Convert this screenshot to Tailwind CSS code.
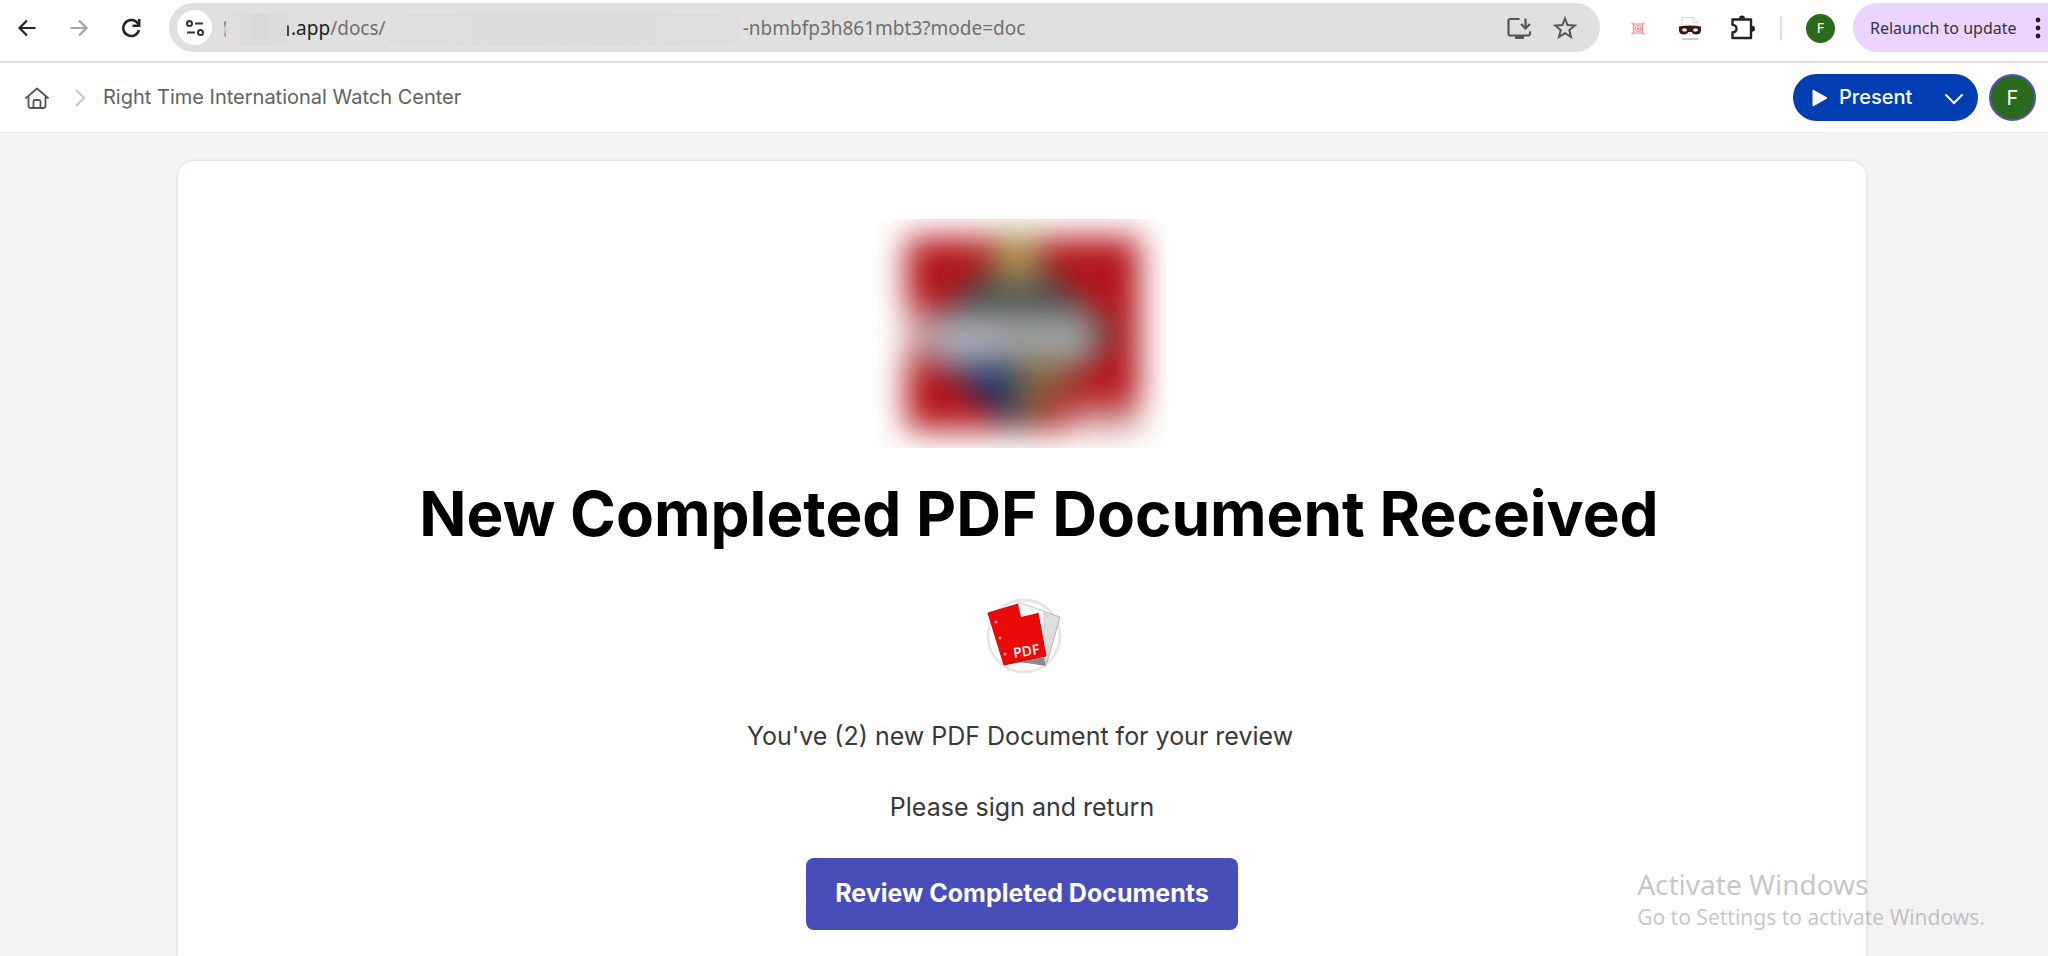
<!DOCTYPE html>
<html lang="en">
<head>
<meta charset="utf-8">
<title>Right Time International Watch Center</title>
<script src="https://cdn.jsdelivr.net/npm/@tailwindcss/browser@4"></script>
</head>
<body class="flex h-screen flex-col overflow-hidden bg-white font-['Inter',sans-serif]">
<nav aria-label="Browser toolbar" class="flex h-[63px] shrink-0 items-start border-b-2 border-[#dedede] pt-[3px] pl-[15px] font-['Noto_Sans',sans-serif]">
  <div class="flex h-[50px] shrink-0 items-center gap-7">
    <button aria-label="Back" class="size-6"><svg viewBox="0 0 24 24" class="size-6" fill="none" stroke="#222" stroke-width="2.2"><path d="M20.500 12H4.500M12 4.500 4.500 12l7.500 7.500"/></svg></button>
    <button aria-label="Forward" class="size-6"><svg viewBox="0 0 24 24" class="size-6" fill="none" stroke="#a3a3a3" stroke-width="2.200"><path d="M3.500 12h16M12 4.500l7.500 7.500-7.500 7.500"/></svg></button>
    <button aria-label="Reload" class="size-6"><svg viewBox="0 0 24 24" class="size-6" fill="none" stroke="#222" stroke-width="2.500"><path d="M20 14.200A8 8 0 1 1 18.300 6.800L20 8.500"/><path d="M20.200 3v6.800H13.500"/></svg></button>
  </div>
  <div class="ml-[26px] flex h-[49px] min-w-0 flex-1 items-center rounded-full bg-[#e0e0e0] pr-[22px] pl-2">
    <button aria-label="Site information" class="flex size-[35px] shrink-0 items-center justify-center rounded-full bg-white"><svg viewBox="0 0 20 20" class="size-5" fill="none" stroke="#333" stroke-width="2"><circle cx="4.500" cy="5.500" r="2.500"/><path d="M10 5.500h8M2 14.500h8"/><circle cx="15.500" cy="14.500" r="2.500"/></svg></button>
    <div class="ml-3 flex min-w-0 flex-1 items-center pt-[2px] text-[19px] whitespace-nowrap text-[#6f6f6f]">
      <span class="h-4 w-[2px] rounded-l-full bg-gradient-to-b from-[#777] via-[#cfcfcf] to-[#b08a70]"></span>
      <span class="h-8 w-[61px] bg-gradient-to-r from-[#dedede] via-[#d9d9d9] to-[#dcdcdc]"></span>
      <span class="mt-1 h-[11px] w-[2px] rounded-tr-full bg-[#444]"></span>
      <span class="ml-[2px] text-[#222]">.app</span><span>/docs/</span>
      <span class="ml-1 h-8 w-[350px] rounded-sm bg-gradient-to-r from-[#dedede] via-[#dbdbdb] to-[#dedede]"></span>
      <span class="ml-[3px]">-nbmbfp3h861mbt3?mode=doc</span>
    </div>
    <div class="flex items-center gap-5">
      <button aria-label="Install app" class="size-[26px]"><svg viewBox="0 0 26 26" class="size-[26px]" fill="none" stroke="#555" stroke-width="2.200"><path d="M13.500 4H4.500Q2.500 4 2.500 6V18.500q0 2 2 2H22q2 0 2-2V16.500"/><path d="M19.500 3.500v9.500M15 9l4.500 4.500L24 9"/><path d="M9 22.500h9" stroke-width="3"/></svg></button>
      <button aria-label="Bookmark" class="size-[26px]"><svg viewBox="0 0 26 26" class="size-[26px]" fill="none" stroke="#555" stroke-width="2"><path d="M13 3.500l2.600 6.500 7.200.5-5.500 4.500 1.800 7L13 18.200 6.900 22l1.800-7-5.500-4.500 7.200-.5z"/></svg></button>
    </div>
  </div>
  <div class="flex h-[50px] shrink-0 items-center">
    <button aria-label="Capture extension" class="ml-7 size-5"><svg viewBox="0 0 20 20" class="size-5" fill="none" stroke="#fb8f98" stroke-width="1.200"><path d="M3.500 4.500l3 3M16.500 4.500l-3 3M3.500 16.500l3-3M16.500 16.500l-3-3"/><rect x="5.500" y="6" width="9" height="9"/><circle cx="10" cy="10.500" r="3"/><circle cx="10" cy="10.500" r="1" fill="#fb7f8a"/></svg></button>
    <button aria-label="Mask extension" class="ml-7 size-7"><svg viewBox="0 0 28 28" class="size-7"><path d="M6 14V3.500h11l5 5V14" fill="#fff" stroke="#d8d8d8"/><path d="M17 3.500v5h5" fill="none" stroke="#d8d8d8"/><path d="M3 12.500q11-2 22 0v3.500q0 4.500-5 4.500-3 0-4.500-2.500h-3q-1.500 2.500-4.500 2.500-5 0-5-4.500z" fill="#35191a"/><ellipse cx="8.500" cy="16" rx="2.600" ry="1.700" fill="#e7dddd"/><ellipse cx="19.500" cy="16" rx="2.600" ry="1.700" fill="#e7dddd"/><path d="M6 25h16" stroke="#ccc" stroke-width="2"/></svg></button>
    <button aria-label="Extensions" class="ml-6 size-7"><svg viewBox="0 0 28 28" class="size-7" fill="none" stroke="#222" stroke-width="2.400" stroke-linejoin="round"><path d="M4.500 5.500H23V24H4.500v-5.500q4-.5 4-3.800t-4-3.800z"/><path d="M11 4.500a3 3 0 0 1 6 0zM24 11.700a3 3 0 0 1 0 6z" fill="#222" stroke="none"/></svg></button>
    <span class="ml-6 h-6 w-[2px] bg-[#e6d4fb]"></span>
    <button aria-label="Profile" class="ml-6 size-[29px] rounded-full bg-[#2c6a1c] text-sm text-white">F</button>
    <button class="-mr-7 ml-[18px] flex h-[49px] w-[223px] items-center self-start rounded-full bg-[#e9d5ff] pl-[17px] text-base whitespace-nowrap text-[#333]">Relaunch to update
      <svg viewBox="0 0 6 24" class="ml-[18px] h-6 w-[6px] shrink-0" fill="#222"><circle cx="3" cy="4" r="2.400"/><circle cx="3" cy="12" r="2.400"/><circle cx="3" cy="20" r="2.400"/></svg>
    </button>
  </div>
</nav>
<header class="flex h-[70px] shrink-0 items-center justify-between border-b border-[#efedee] pr-3 pl-6">
  <nav aria-label="Breadcrumb" class="flex items-center">
    <a href="#" aria-label="Home"><svg viewBox="0 0 26 26" class="size-[26px]" fill="none" stroke="#555" stroke-width="1.800" stroke-linecap="round" stroke-linejoin="round"><path d="M2 13 13 3.500 24 13M4.500 11v9.500q0 2.500 2.500 2.500h12q2.500 0 2.500-2.500V11"/><path d="M9.500 22.500v-6q0-1.500 1.500-1.500h4q1.500 0 1.500 1.500v6"/></svg></a>
    <svg viewBox="0 0 12 20" class="ml-6 h-5 w-3" fill="none" stroke="#c4c4c4" stroke-width="2"><path d="M2 2l8 8-8 8"/></svg>
    <a href="#" class="ml-[17px] pb-[2px] text-xl text-[#626262]">Right Time International Watch Center</a>
  </nav>
  <div class="flex items-center gap-[11px]">
    <div class="flex h-[47px] w-[185px] items-center rounded-full bg-[#003eb1] text-white">
      <button class="flex flex-1 items-center gap-[11px] pl-[19px] text-xl font-medium"><svg viewBox="0 0 16 18" class="h-[18px] w-4" fill="#fff" stroke="#fff" stroke-linejoin="round"><path d="M1 1l14 8-14 8z"/></svg><span class="pb-[2px]">Present</span></button>
      <button aria-label="Present options" class="mr-[14px]"><svg viewBox="0 0 20 20" class="size-5" fill="none" stroke="#fff" stroke-width="2" stroke-linecap="round"><path d="M2 7l8 8 8-8"/></svg></button>
    </div>
    <button aria-label="Account" class="size-[47px] rounded-full border-2 border-[#5a50bd] bg-[#2c6a1c] text-xl text-white">F</button>
  </div>
</header>
<main class="relative flex flex-1 justify-center overflow-hidden bg-[#f4f2f3] pt-7 pr-[182px] pl-[178px]">
  <article class="flex w-full shrink-0 flex-col items-center rounded-t-2xl bg-white pt-[58px] shadow-[0_0_3px_1px_#e2dfe1]">
    <svg role="img" aria-label="Blurred company logo" viewBox="0 0 296 229" class="mr-[7px] h-[229px] w-[296px] rounded-xl">
      <defs><filter id="soft" filterUnits="userSpaceOnUse" x="-60" y="-60" width="416" height="349" color-interpolation-filters="sRGB"><feGaussianBlur stdDeviation="16"/></filter></defs>
      <rect width="296" height="229" fill="#fff"/>
      <g filter="url(#soft)">
        <rect x="-120" y="-120" width="536" height="469" fill="#fff"/>
        <rect x="35" y="18" width="234" height="193" fill="#b4141b"/>
        <rect x="195" y="184" width="74" height="27" fill="#cc8d8b"/>
        <path d="M146 22 246 115 146 216 46 115z" fill="#464d4c"/>
        <path d="M122 14h50l-4 50h-44z" fill="#ab9050"/>
        <path d="M74 146h68v58z" fill="#16356f"/>
        <path d="M146 142h66l-40 56h-26z" fill="#85633c"/>
        <rect x="54" y="94" width="170" height="48" fill="#a0a3a2"/>
        <rect x="60" y="98" width="64" height="48" fill="#abacb6"/>
        <rect x="35" y="88" width="22" height="50" fill="#cf8a8a"/>
      </g>
    </svg>
    <h1 class="mt-[26px] ml-[34px] text-[62px] leading-[80px] font-bold whitespace-nowrap text-black">New Completed PDF Document Received</h1>
    <svg role="img" aria-label="PDF documents" viewBox="0 0 80 80" class="mt-[42px] ml-1 size-20">
      <circle cx="40" cy="40" r="36" fill="#fff" stroke="#e6e6e6" stroke-width="3"/>
      <path d="M56 14l20 7-13 46-30-1z" fill="#dedede" stroke="#b5b5b5"/>
      <path d="M34 6l26 9 2 52-28-1z" fill="#f4f4f4" stroke="#cfcfcf"/>
      <path d="M36 66l24-5 2 9z" fill="#8a8a8a"/>
      <path d="M4 17 34 8l3 13 17-4 8 43-42 9z" fill="#ea0a0a" stroke="#c90808" stroke-linejoin="round"/>
      <path d="M34 8l3 13 17-4z" fill="#f7f7f7"/>
      <circle cx="12" cy="26" r="1.500" fill="#f6a0a0"/><circle cx="16" cy="42" r="1.500" fill="#f6a0a0"/><circle cx="21" cy="58" r="1.500" fill="#f6a0a0"/>
      <text x="30" y="62" transform="rotate(-9 30 62)" font-family="Open Sans, sans-serif" font-size="14" font-weight="600" fill="#fff">PDF</text>
    </svg>
    <p class="mt-[42px] mr-1 text-[25px] leading-9 text-[#383838]">You've (2) new PDF Document for your review</p>
    <p class="mt-[35px] text-[25px] leading-9 text-[#383838]">Please sign and return</p>
    <a href="#" class="mt-[33px] flex h-[72px] items-center rounded-lg bg-[#484eb9] px-[29px] text-[25px] font-bold text-white">Review Completed Documents</a>
  </article>
  <aside class="pointer-events-none absolute right-[63px] bottom-6 font-['Noto_Sans',sans-serif] whitespace-nowrap text-[#a0a0a0]/60">
    <p class="text-[28px] leading-9">Activate Windows</p>
    <p class="text-[21px] leading-[30px]">Go to Settings to activate Windows.</p>
  </aside>
</main>
</body>
</html>
